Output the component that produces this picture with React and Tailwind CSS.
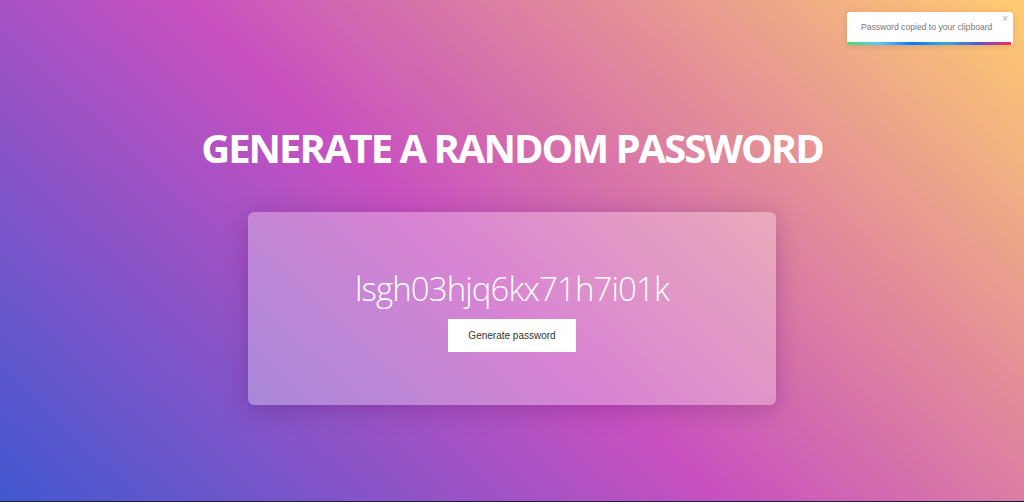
import React, { useState } from 'react';

const randomPassword = () => 'lsgh03hjq6kx71h7i01k';

const Toast = ({ message, onClose }) => (
  <div className="absolute top-[12px] right-[11px] w-[166px] h-[33px] bg-white rounded-[3px] shadow-[0_1px_6px_rgba(0,0,0,0.12)] overflow-hidden">
    <p className="pl-[14px] pt-[10px] text-[8.6px] leading-[10px] text-[#777] font-['Liberation_Sans',Arial,sans-serif] whitespace-nowrap">
      {message}
    </p>
    <button
      onClick={onClose}
      className="absolute top-[2px] right-[5px] text-[10px] leading-none text-[#aaa] font-['Liberation_Sans',Arial,sans-serif]"
    >
      ×
    </button>
    <div className="absolute left-0 bottom-0 h-[3px] w-[164px] bg-[linear-gradient(to_right,#4cd964,#5ac8fa,#007aff,#34aadc,#5856d6,#ff2d55)]" />
  </div>
);

const App = () => {
  const [password, setPassword] = useState(randomPassword());
  const [toast, setToast] = useState(true);

  return (
    <div className="w-[1024px] h-[502px] overflow-hidden">
      <div className="relative h-[501px] flex flex-col items-center bg-[linear-gradient(43deg,#4158D0_0%,#C850C0_46%,#FFCC70_100%)] font-['Open_Sans',sans-serif]">
        <h1 className="mt-[128px] text-[40px] leading-none font-bold text-white tracking-[-2px]">
          GENERATE A RANDOM PASSWORD
        </h1>

        <div className="mt-[44px] w-[528px] h-[193px] rounded-[6px] bg-white/30 shadow-[0_4px_24px_rgba(60,0,80,0.25)] flex flex-col items-center pt-[60px]">
          <p className="text-[33px] leading-none font-light text-white tracking-[-0.9px]">{password}</p>
          <button
            onClick={() => {
              setPassword(randomPassword());
              setToast(true);
            }}
            className="mt-[14px] w-[128px] h-[33px] bg-white text-[10px] text-[#333] font-['Liberation_Sans',Arial,sans-serif]"
          >
            Generate password
          </button>
        </div>

        {toast && <Toast message="Password copied to your clipboard" onClose={() => setToast(false)} />}
      </div>
      <div className="h-[1px] bg-[#1c1f3a]" />
    </div>
  );
};

export default App;
